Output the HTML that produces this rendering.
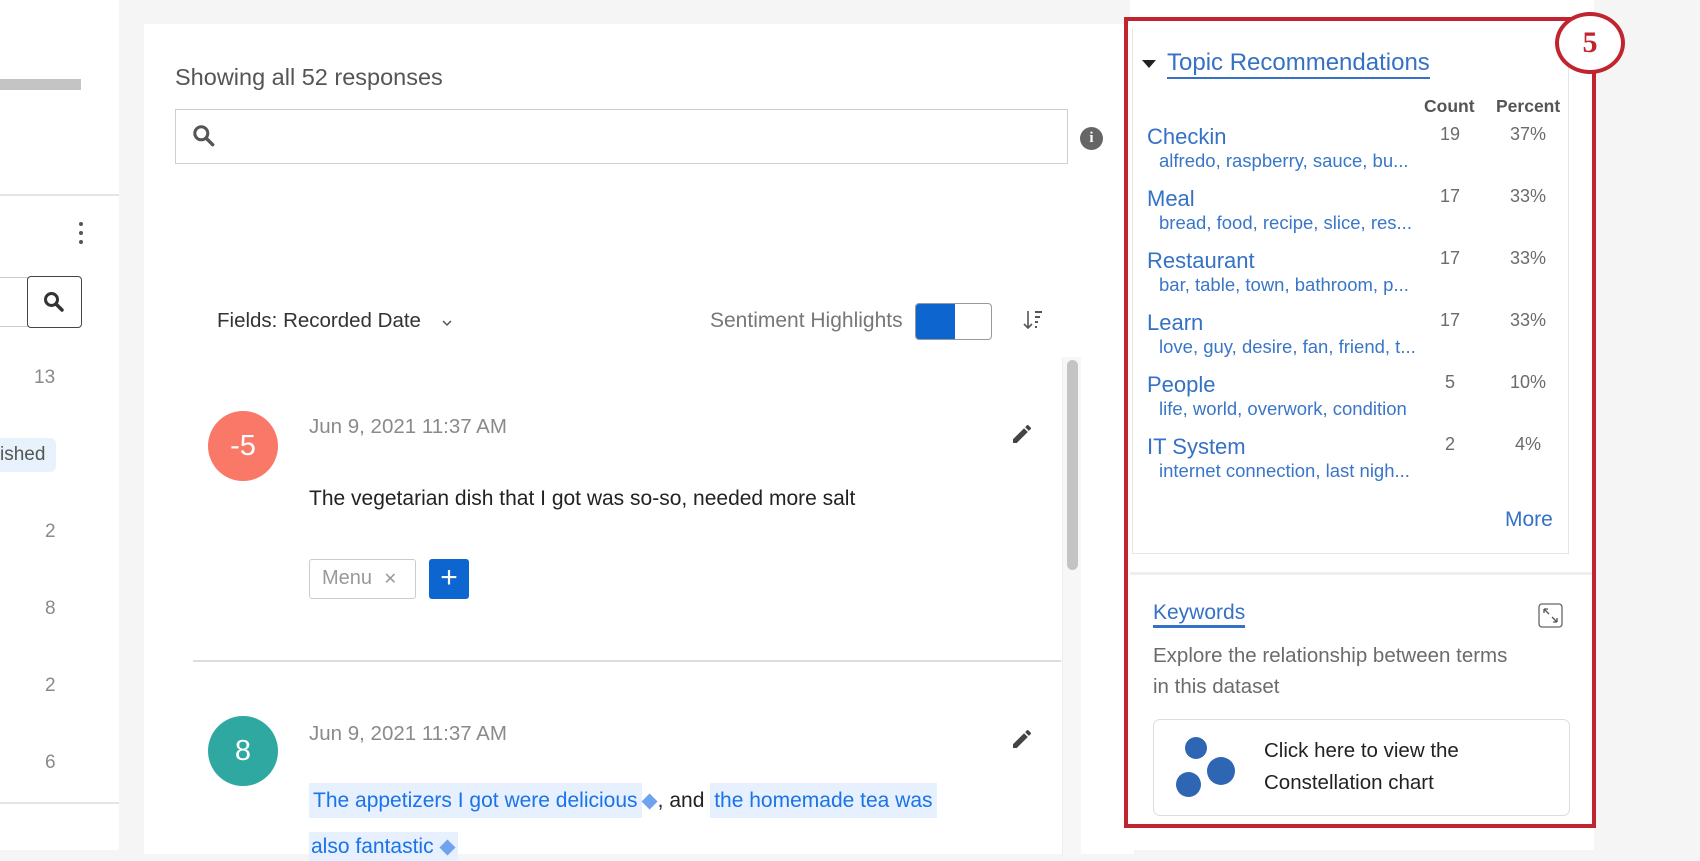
<!DOCTYPE html>
<html><head><meta charset="utf-8"><style>
*{box-sizing:border-box;margin:0;padding:0}
body{width:1700px;height:850px;overflow:hidden;background:#f5f5f5;font-family:"Liberation Sans",sans-serif;position:relative;color:#222}
.a{position:absolute;white-space:nowrap}
.tn{font-size:22px;color:#3571c4;line-height:26px}
.ts{font-size:18.5px;color:#3a76c8;line-height:22px}
.num{font-size:18px;color:#6b6b6b;text-align:center;width:40px}
.g{color:#8a8a8a}
</style></head><body>
<!-- left panel -->
<div class="a" style="left:0;top:0;width:119px;height:850px;background:#fff"></div>
<div class="a" style="left:0;top:79px;width:81px;height:11px;background:#c4c4c4"></div>
<div class="a" style="left:0;top:194px;width:119px;height:2px;background:#e4e4e4"></div>
<div class="a" style="left:79px;top:222px;width:4px;height:4px;border-radius:2px;background:#555;box-shadow:0 9px 0 #555,0 18px 0 #555"></div>
<div class="a" style="left:-4px;top:277px;width:32px;height:50px;border:1px solid #ccc"></div>
<div class="a" style="left:27px;top:276px;width:55px;height:52px;border:1.5px solid #444;border-radius:4px;background:#fff"></div>
<svg class="a" style="left:42px;top:290px" width="24" height="24" viewBox="0 0 24 24"><circle cx="9.5" cy="9.5" r="6" fill="none" stroke="#333" stroke-width="3"/><line x1="14" y1="14" x2="20" y2="20" stroke="#333" stroke-width="3.5" stroke-linecap="round"/></svg>
<div class="a g" style="left:34px;top:367px;font-size:19px">13</div>
<div class="a" style="left:0;top:438px;width:56px;height:34px;background:#e8f2fd;border-radius:0 6px 6px 0"></div>
<div class="a" style="left:0;top:444px;font-size:19px;color:#555">ished</div>
<div class="a g" style="left:45px;top:521px;font-size:19px">2</div>
<div class="a g" style="left:45px;top:598px;font-size:19px">8</div>
<div class="a g" style="left:45px;top:675px;font-size:19px">2</div>
<div class="a g" style="left:45px;top:752px;font-size:19px">6</div>
<div class="a" style="left:0;top:802px;width:119px;height:2px;background:#e4e4e4"></div>

<!-- main card -->
<div class="a" style="left:144px;top:24px;width:990px;height:830px;background:#fff"></div>
<div class="a" style="left:175px;top:64px;font-size:23.5px;color:#555">Showing all 52 responses</div>
<div class="a" style="left:175px;top:109px;width:893px;height:55px;border:1.5px solid #cfcfcf"></div>
<svg class="a" style="left:191px;top:123px" width="26" height="26" viewBox="0 0 24 24"><circle cx="9.5" cy="9.5" r="6" fill="none" stroke="#555" stroke-width="2.8"/><line x1="14" y1="14" x2="20" y2="20" stroke="#555" stroke-width="3.2" stroke-linecap="round"/></svg>
<div class="a" style="left:1080px;top:127px;width:23px;height:23px;border-radius:50%;background:#666;color:#fff;font:bold 15px 'Liberation Serif',serif;text-align:center;line-height:23px">i</div>
<div class="a" style="left:217px;top:309px;font-size:20.5px;color:#333">Fields: Recorded Date</div>
<svg class="a" style="left:441px;top:318px" width="12" height="10" viewBox="0 0 12 10"><path d="M2 3l4 4 4-4" fill="none" stroke="#555" stroke-width="1.5"/></svg>
<div class="a" style="left:710px;top:309px;font-size:21px;color:#777">Sentiment Highlights</div>
<div class="a" style="left:915px;top:303px;width:77px;height:37px;border:1.5px solid #999;border-radius:4px;background:#fff;overflow:hidden"><div style="width:39px;height:100%;background:#0d66d0"></div></div>
<svg class="a" style="left:1022px;top:308px" width="24" height="26" viewBox="0 0 24 26"><path d="M6 3v17M2 16l4 4 4-4" fill="none" stroke="#555" stroke-width="1.6"/><path d="M13 4h7M13 9h5M13 14h3M13 19h2" stroke="#555" stroke-width="2"/></svg>
<div class="a" style="left:1062px;top:357px;width:19px;height:500px;background:#f7f7f7;border-left:1px solid #eee"></div>
<div class="a" style="left:1067px;top:360px;width:11px;height:210px;background:#c4c4c4;border-radius:6px"></div>

<div class="a" style="left:208px;top:411px;width:70px;height:70px;border-radius:50%;background:#fa7868;color:#fff;font-size:29px;text-align:center;line-height:70px">-5</div>
<div class="a g" style="left:309px;top:415px;font-size:20.5px">Jun 9, 2021 11:37 AM</div>
<svg class="a" style="left:1010px;top:422px" width="24" height="24" viewBox="0 0 24 24"><path d="M3 17.25V21h3.75L17.8 9.94l-3.75-3.75zM20.7 7.04a1 1 0 000-1.41l-2.34-2.34a1 1 0 00-1.41 0l-1.83 1.83 3.75 3.75z" fill="#444"/></svg>
<div class="a" style="left:309px;top:487px;font-size:21px;color:#222">The vegetarian dish that I got was so-so, needed more salt</div>
<div class="a" style="left:309px;top:559px;width:107px;height:40px;border:1.5px solid #ccc;border-radius:3px;font-size:20px;color:#999;line-height:37px;padding-left:12px">Menu <span style="margin-left:6px;font-size:16px">✕</span></div>
<div class="a" style="left:429px;top:559px;width:40px;height:40px;background:#0d66d0;border-radius:3px;color:#fff;font-size:30px;line-height:38px;text-align:center">+</div>
<div class="a" style="left:193px;top:660px;width:868px;height:1.5px;background:#ddd"></div>

<div class="a" style="left:208px;top:716px;width:70px;height:70px;border-radius:50%;background:#2ea8a0;color:#fff;font-size:29px;text-align:center;line-height:70px">8</div>
<div class="a g" style="left:309px;top:722px;font-size:20.5px">Jun 9, 2021 11:37 AM</div>
<svg class="a" style="left:1010px;top:727px" width="24" height="24" viewBox="0 0 24 24"><path d="M3 17.25V21h3.75L17.8 9.94l-3.75-3.75zM20.7 7.04a1 1 0 000-1.41l-2.34-2.34a1 1 0 00-1.41 0l-1.83 1.83 3.75 3.75z" fill="#444"/></svg>
<div class="a" style="left:309px;top:783px;font-size:21px;line-height:36px;color:#222"><span style="background:#e6f0fe;color:#1a73e8;padding:6px 4px">The appetizers I got were delicious</span><span style="color:#6fa3ee">◆</span>, and <span style="background:#e6f0fe;color:#1a73e8;padding:6px 4px">the homemade tea was</span></div>
<div class="a" style="left:309px;top:832px;font-size:21px;background:#e6f0fe;color:#1a73e8;padding:2px 2px">also fantastic <span style="color:#6fa3ee">◆</span></div>

<!-- right panel -->
<div class="a" style="left:1130px;top:0;width:464px;height:850px;background:#fff"></div>
<div class="a" style="left:1132px;top:28px;width:437px;height:526px;border:1.5px solid #e6e6e6;border-top:none"></div>
<div class="a" style="left:1130px;top:572px;width:464px;height:3px;background:#eee"></div>
<div class="a" style="left:1142px;top:60px;width:0;height:0;border-left:7px solid transparent;border-right:7px solid transparent;border-top:8px solid #222"></div>
<div class="a" style="left:1167px;top:49px;font-size:24px;color:#3571c4;border-bottom:2px solid #3571c4;line-height:28px">Topic Recommendations</div>
<div class="a" style="left:1424px;top:96px;font-size:17.5px;font-weight:bold;color:#555">Count</div>
<div class="a" style="left:1496px;top:96px;font-size:17.5px;font-weight:bold;color:#555">Percent</div>

<div class="a" style="left:1147px;top:124px">
<div style="position:relative;height:62px"><div class="tn">Checkin</div><div class="ts" style="margin-left:12px">alfredo, raspberry, sauce, bu...</div><div class="a num" style="left:283px;top:0">19</div><div class="a num" style="left:351px;top:0;width:60px">37%</div></div>
<div style="position:relative;height:62px"><div class="tn">Meal</div><div class="ts" style="margin-left:12px">bread, food, recipe, slice, res...</div><div class="a num" style="left:283px;top:0">17</div><div class="a num" style="left:351px;top:0;width:60px">33%</div></div>
<div style="position:relative;height:62px"><div class="tn">Restaurant</div><div class="ts" style="margin-left:12px">bar, table, town, bathroom, p...</div><div class="a num" style="left:283px;top:0">17</div><div class="a num" style="left:351px;top:0;width:60px">33%</div></div>
<div style="position:relative;height:62px"><div class="tn">Learn</div><div class="ts" style="margin-left:12px">love, guy, desire, fan, friend, t...</div><div class="a num" style="left:283px;top:0">17</div><div class="a num" style="left:351px;top:0;width:60px">33%</div></div>
<div style="position:relative;height:62px"><div class="tn">People</div><div class="ts" style="margin-left:12px">life, world, overwork, condition</div><div class="a num" style="left:283px;top:0">5</div><div class="a num" style="left:351px;top:0;width:60px">10%</div></div>
<div style="position:relative;height:62px"><div class="tn">IT System</div><div class="ts" style="margin-left:12px">internet connection, last nigh...</div><div class="a num" style="left:283px;top:0">2</div><div class="a num" style="left:351px;top:0;width:60px">4%</div></div>
</div>
<div class="a" style="left:1505px;top:508px;font-size:21px;color:#3571c4">More</div>

<div class="a" style="left:1153px;top:600px;font-size:21px;color:#3571c4;border-bottom:3px solid #3571c4;line-height:25px">Keywords</div>
<svg class="a" style="left:1538px;top:603px" width="25" height="25" viewBox="0 0 25 25"><rect x="1" y="1" width="23" height="23" rx="3" fill="none" stroke="#666" stroke-width="1.3"/><path d="M6 6l5 5M6 6h4M6 6v4M19 19l-5-5M19 19h-4M19 19v-4" fill="none" stroke="#555" stroke-width="1.3"/></svg>
<div class="a" style="left:1153px;top:640px;font-size:20.5px;color:#6b6b6b;line-height:31px">Explore the relationship between terms<br>in this dataset</div>
<div class="a" style="left:1153px;top:719px;width:417px;height:97px;border:1.5px solid #ddd;border-radius:7px"></div>
<div class="a" style="left:1185px;top:737px;width:22px;height:22px;border-radius:50%;background:#2f66b3"></div>
<div class="a" style="left:1207px;top:757px;width:28px;height:28px;border-radius:50%;background:#2f66b3"></div>
<div class="a" style="left:1176px;top:772px;width:25px;height:25px;border-radius:50%;background:#2f66b3"></div>
<div class="a" style="left:1264px;top:735px;font-size:20.5px;color:#222;line-height:32px">Click here to view the<br>Constellation chart</div>

<!-- red box -->
<div class="a" style="left:1124px;top:17px;width:472px;height:811px;border:4px solid #c1232f"></div>
<div class="a" style="left:1555px;top:12px;width:70px;height:62px;border:4px solid #c1232f;border-radius:50%;background:#fff;color:#c1232f;font:bold 30px 'Liberation Serif',serif;text-align:center;line-height:54px">5</div>
</body></html>
